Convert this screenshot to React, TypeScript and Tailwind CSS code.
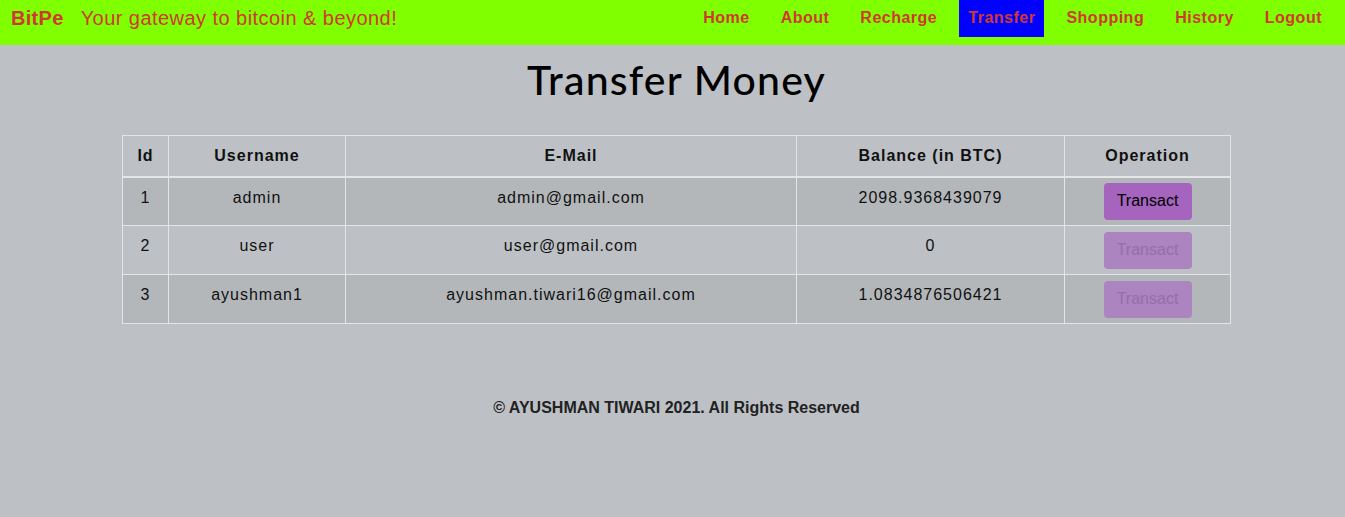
const users = [
  { id: 1, username: "admin", email: "admin@gmail.com", balance: "2098.9368439079", enabled: true },
  { id: 2, username: "user", email: "user@gmail.com", balance: "0", enabled: false },
  { id: 3, username: "ayushman1", email: "ayushman.tiwari16@gmail.com", balance: "1.0834876506421", enabled: false },
];

const links = ["Home", "About", "Recharge", "Transfer", "Shopping", "History", "Logout"];

export default function App() {
  return (
    <div className="min-h-[517px] bg-[#bdc1c5] font-['Liberation_Sans',Arial,sans-serif]">
      <nav className="h-[45px] bg-[#7fff00] flex items-start justify-between pl-[11px] pr-[14px]">
        <div className="flex items-center h-[35px] text-[#d0392f]">
          <span className="text-[20px] font-bold tracking-[0.3px]">BitPe</span>
          <span className="text-[20px] ml-[17px] tracking-[0.45px]">Your gateway to bitcoin &amp; beyond!</span>
        </div>
        <ul className="flex gap-[13px]">
          {links.map((l) => (
            <li key={l}>
              <a
                href="#"
                className={
                  "flex items-center h-[37px] pb-[2px] px-[9px] text-[16px] font-bold tracking-[0.5px] text-[#d0392f] " +
                  (l === "Transfer" ? "bg-[#0000ff]" : "")
                }
              >
                {l}
              </a>
            </li>
          ))}
        </ul>
      </nav>

      <main className="pl-[8px]">
        <h1 className="text-center text-[41px] leading-none mt-[14px] font-['Lato',sans-serif] font-medium tracking-[1.2px] text-black">
          Transfer Money
        </h1>

        <div className="pl-[114px] pr-[114px] mt-[35px]">
          <table className="w-full border-collapse text-[16px] tracking-[1px] text-[#111]">
            <thead>
              <tr className="h-[41px] border-b-2 border-[#e3e5e7]">
                <th className="w-[46px] border border-[#e3e5e7] font-bold">Id</th>
                <th className="w-[177px] border border-[#e3e5e7] font-bold">Username</th>
                <th className="w-[451px] border border-[#e3e5e7] font-bold">E-Mail</th>
                <th className="w-[268px] border border-[#e3e5e7] font-bold">Balance (in BTC)</th>
                <th className="border border-[#e3e5e7] font-bold">Operation</th>
              </tr>
            </thead>
            <tbody>
              {users.map((u, i) => (
                <tr key={u.id} className={"h-[49px] " + (i % 2 === 0 ? "bg-[#b3b7ba]" : "")}>
                  <td className="border border-[#e3e5e7] text-center align-top pt-[8px]">{u.id}</td>
                  <td className="border border-[#e3e5e7] text-center align-top pt-[8px]">{u.username}</td>
                  <td className="border border-[#e3e5e7] text-center align-top pt-[8px]">{u.email}</td>
                  <td className="border border-[#e3e5e7] text-center align-top pt-[8px]">{u.balance}</td>
                  <td className="border border-[#e3e5e7] text-center align-middle">
                    <button
                      disabled={!u.enabled}
                      className={
                        "w-[88px] h-[37px] rounded-[4px] text-[16px] tracking-normal " +
                        (u.enabled ? "bg-[#a564bd] text-black" : "bg-[#ab84c0] text-[#9470a6]")
                      }
                    >
                      Transact
                    </button>
                  </td>
                </tr>
              ))}
            </tbody>
          </table>
        </div>

        <footer className="text-center mt-[72px] text-[16px] font-bold text-[#222]">
          © AYUSHMAN TIWARI 2021. All Rights Reserved
        </footer>
      </main>
    </div>
  );
}
